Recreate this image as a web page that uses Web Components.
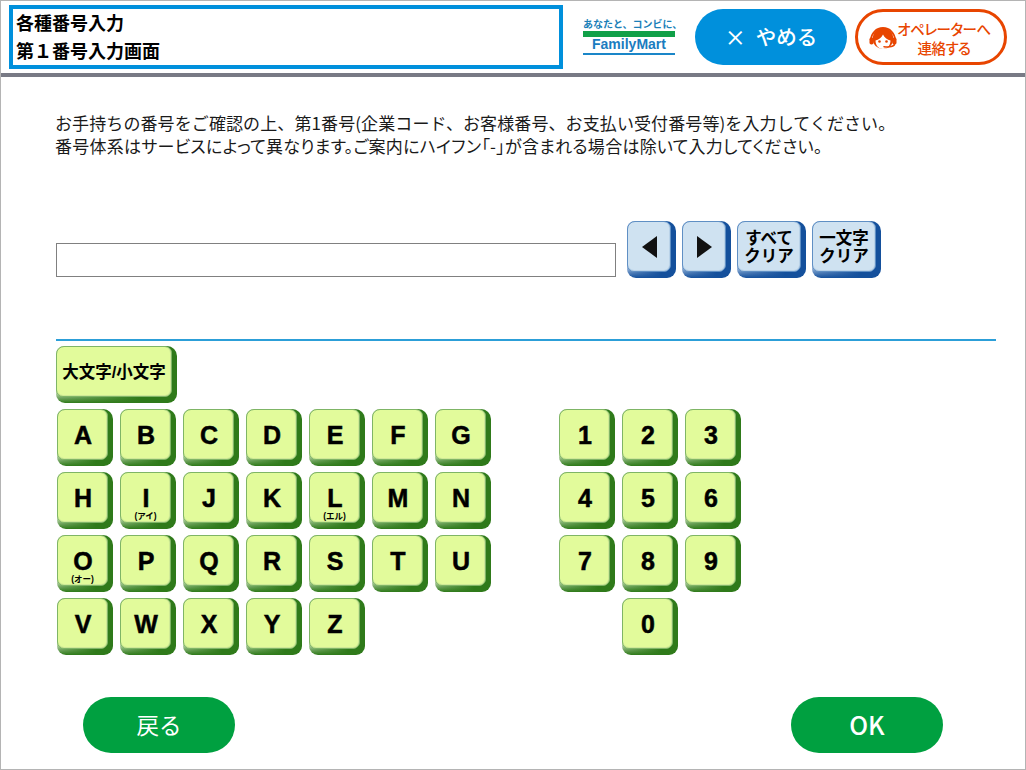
<!DOCTYPE html>
<html lang="ja">
<head>
<meta charset="utf-8">
<title>各種番号入力</title>
<style>
  html, body { margin: 0; padding: 0; background: #fff; }
  body { font-family: "Noto Sans CJK JP", "Liberation Sans", sans-serif; }
</style>
</head>
<body>
<kiosk-screen>
  <kiosk-header slot="header" line1="各種番号入力" line2="第１番号入力画面"></kiosk-header>
  <number-entry></number-entry>
  <key-pad></key-pad>
  <footer-bar></footer-bar>
</kiosk-screen>

<script>
'use strict';

const FONT = '"Noto Sans CJK JP", "Liberation Sans", sans-serif';
// latin first so that stacked lines get a compact text box
const TIGHT = '"Liberation Sans", "Noto Sans CJK JP", sans-serif';

class KioskScreen extends HTMLElement {
  constructor() {
    super();
    this.attachShadow({mode: 'open'});
    this.shadowRoot.innerHTML = `
      <style>
        :host { display: block; width: 1026px; height: 770px; box-sizing: border-box;
                border: 1px solid #b4b4b4; overflow: hidden; background: #fff; }
        .head { display: block; }
        .body { display: flex; flex-direction: column; }
      </style>
      <slot name="header" class="head"></slot>
      <div class="body"><slot></slot></div>
    `;
  }
}

class PillButton extends HTMLElement {
  constructor() {
    super();
    this.attachShadow({mode: 'open'});
    this.shadowRoot.innerHTML = `
      <style>
        :host { display: flex; align-items: center; justify-content: center; box-sizing: border-box;
                width: 152px; height: 56px; border-radius: 28px; color: #fff; padding-bottom: 2px;
                background: var(--pill-bg, #0090dc); font: 400 22.500px ${FONT}; line-height: 1; }
      </style>
      <slot></slot>
    `;
  }
}

class KioskHeader extends HTMLElement {
  constructor() {
    super();
    this.attachShadow({mode: 'open'});
    this.shadowRoot.innerHTML = `
      <style>
        :host { display: block; }
        .bar { display: flex; align-items: flex-start; height: 72px; border-bottom: 4px solid #787a85; }
        .title { box-sizing: border-box; width: 554px; height: 64px; margin: 4px 0 0 8px;
                 border: 4px solid #0090dc; padding: 0 0 3px 3px; color: #000;
                 font: 700 18px/28px ${FONT}; display: flex; flex-direction: column; justify-content: center; }
        .logo { width: 92px; margin: 14px 0 0 20px; display: flex; flex-direction: column; align-items: stretch; }
        .tag { font: 700 10px/17px ${FONT}; color: #1b7fb8; white-space: nowrap; letter-spacing: 0; height: 14px; }
        .green { height: 6px; background: #10a048; margin-top: 2px; }
        .name { font: 700 14px/15px "Liberation Sans", sans-serif; color: #1a7cc0; text-align: center; margin-top: 0; height: 16px; }
        .blue { height: 2px; background: #1a86c8; }
        .cancel { margin: 8px 0 0 20px; font-size: 20.500px; font-weight: 500; gap: 10px; }
        .x { font-size: 21px; }
        .op { margin: 8px 0 0 8px; padding-bottom: 0; --pill-bg: #fff; border: 3px solid #e84500; color: #e84500; }
        .op-in { display: flex; align-items: center; gap: 2px; margin-left: -3px; }
        .op-txt { font: 500 14.500px/19px ${TIGHT}; text-align: center; white-space: nowrap; margin-left: -3px;
                  font-feature-settings: "palt"; letter-spacing: -.5px; padding-top: 5px; }
      </style>
      <div class="bar">
        <div class="title"><div>${this.getAttribute('line1')}</div><div>${this.getAttribute('line2')}</div></div>
        <div class="logo">
          <div class="tag">あなたと、コンビに、</div>
          <div class="green"></div>
          <div class="name">FamilyMart</div>
          <div class="blue"></div>
        </div>
        <pill-button class="cancel"><span class="x">×</span><span>やめる</span></pill-button>
        <pill-button class="op">
          <div class="op-in">
            <svg width="30" height="30" viewBox="0 0 30 30">
              <path d="M3 18A12 12 0 0 1 27 18" fill="none" stroke="#e84500" stroke-width="1.800"/>
              <circle cx="15" cy="16.500" r="10.500" fill="#e84500"/>
              <path d="M7.500 18.500c3-.5 6-3 7.500-6 1.500 3 4.500 5.500 7.500 6 0 5-3.500 8.500-7.500 8.500s-7.500-3.500-7.500-8.500z" fill="#fff"/>
              <circle cx="11.500" cy="19.500" r="1.300" fill="#e84500"/>
              <circle cx="18.500" cy="19.500" r="1.300" fill="#e84500"/>
              <rect x="1.500" y="15.500" width="4" height="7" rx="1.800" fill="#e84500"/>
              <rect x="24.500" y="15.500" width="4" height="7" rx="1.800" fill="#e84500"/>
              <path d="M26.500 22c0 2.500-5 3.500-10.500 2.700" fill="none" stroke="#e84500" stroke-width="1.600" stroke-linecap="round"/>
            </svg>
            <div class="op-txt">オペレーターへ<br>連絡する</div>
          </div>
        </pill-button>
      </div>
    `;
  }
}

class KeyButton extends HTMLElement {
  constructor() {
    super();
    this.attachShadow({mode: 'open'});
    const sub = this.getAttribute('sub');
    this.shadowRoot.innerHTML = `
      <style>
        :host { display: block; position: relative; box-sizing: border-box; width: 56px; height: 57px;
                border-radius: 8px 10px 9px 9px; --cap: #e2fb9b; --rim: #7fb566; --glow: #cfe997; --side: #2f7a1a; --fade: #c6dcb8;
                background:
                  linear-gradient(to bottom, transparent 0, transparent 46px, var(--side) 57px),
                  linear-gradient(to right, var(--fade) 0, var(--side) 70%, var(--side) 100%); }
        :host([tone="blue"]) { --cap: #cfe2f1; --rim: #5f8fc4; --glow: #b9d2e8; --side: #14509c; --fade: #a9c3e2; }
        .cap { position: absolute; inset: 0 5px 6px 0; box-sizing: border-box; border: 1.500px solid var(--rim);
               border-radius: 8px 7px 7px 7px; background: var(--cap); color: #000;
               box-shadow: inset 0 -1px 0 var(--glow), inset -1px 0 0 var(--glow);
               display: flex; flex-direction: column; align-items: center; justify-content: center; padding-left: 1px; }
        :host([tone="blue"]) .cap, :host([wide]) .cap { padding-left: 0; }
        .main { font: 700 25px/18px "Liberation Sans", sans-serif; -webkit-text-stroke: .5px #000; }
        .sub { position: absolute; left: 0; right: 0; bottom: 1px; text-align: center;
               font: 700 8.500px/9px ${TIGHT}; white-space: nowrap; }
        :host([tone="blue"]) .main, :host([wide]) .main { font: 700 16.500px/18px ${TIGHT}; -webkit-text-stroke: 0; text-align: center; white-space: nowrap; }
      </style>
      <div class="cap">
        <div class="main"><slot></slot></div>
        ${sub ? `<div class="sub">${sub}</div>` : ''}
      </div>
    `;
  }
}

class NumberEntry extends HTMLElement {
  constructor() {
    super();
    this.attachShadow({mode: 'open'});
    this.shadowRoot.innerHTML = `
      <style>
        :host { display: block; padding: 34px 0 0 54px; }
        .msg { font: 400 17px/23px ${FONT}; color: #1a1a1a; white-space: nowrap; letter-spacing: .1px; }
        .second { font-feature-settings: "palt"; letter-spacing: .26px; }
        .row { display: flex; align-items: flex-end; margin-top: 64px; }
        .field { box-sizing: border-box; width: 560px; height: 34px; border: 1px solid #808080; margin-left: 1px; }
        .keys { display: flex; gap: 6px; margin: 0 0 -1px 11px; }
        .keys key-button { width: 49px; }
        .keys key-button.txt { width: 69px; }
      </style>
      <div class="msg">
        <div>お手持ちの番号をご確認の上、第1番号(企業コード、お客様番号、お支払い受付番号等)を入力してください。</div>
        <div class="second">番号体系はサービスによって異なります。ご案内にハイフン「-」が含まれる場合は除いて入力してください。</div>
      </div>
      <div class="row">
        <div class="field"></div>
        <div class="keys">
          <key-button tone="blue"><svg style="display:block" width="15" height="22" viewBox="0 0 15 22"><path d="M15 0v22L0 11z" fill="#111"/></svg></key-button>
          <key-button tone="blue"><svg style="display:block" width="15" height="22" viewBox="0 0 15 22"><path d="M0 0v22l15-11z" fill="#111"/></svg></key-button>
          <key-button tone="blue" class="txt">すべて<br>クリア</key-button>
          <key-button tone="blue" class="txt">一文字<br>クリア</key-button>
        </div>
      </div>
    `;
  }
}

class KeyPad extends HTMLElement {
  constructor() {
    super();
    this.attachShadow({mode: 'open'});
    const subs = {I: '(アイ)', L: '(エル)', O: '(オー)'};
    const letters = 'ABCDEFGHIJKLMNOPQRSTUVWXYZ'.split('').map(c =>
      `<key-button${subs[c] ? ` sub="${subs[c]}"` : ''}>${c}</key-button>`).join('');
    const digits = '123456789'.split('').map(c => `<key-button>${c}</key-button>`).join('');
    this.shadowRoot.innerHTML = `
      <style>
        :host { display: block; margin: 62px 0 0 55px; width: 940px; }
        .rule { height: 2px; background: #2c9fd8; }
        .case { width: 121px; height: 57px; margin: 5px 0 6px; }
        .pads { display: flex; gap: 68px; margin-left: 1px; }
        .grid { display: grid; grid-template-columns: repeat(7, 56px); grid-auto-rows: 57px; gap: 6px 7px; }
        .num { grid-template-columns: repeat(3, 56px); }
        .zero { grid-column: 2; }
      </style>
      <div class="rule"></div>
      <key-button wide class="case">大文字/小文字</key-button>
      <div class="pads">
        <div class="grid">${letters}</div>
        <div class="grid num">${digits}<key-button class="zero">0</key-button></div>
      </div>
    `;
  }
}

class FooterBar extends HTMLElement {
  constructor() {
    super();
    this.attachShadow({mode: 'open'});
    this.shadowRoot.innerHTML = `
      <style>
        :host { display: flex; justify-content: space-between; padding: 42px 0 0 82px; width: 860px; --pill-bg: #00a040; }
        .ok { font-size: 25px; font-weight: 500; }
      </style>
      <pill-button>戻る</pill-button>
      <pill-button class="ok">OK</pill-button>
    `;
  }
}

customElements.define('kiosk-screen', KioskScreen);
customElements.define('pill-button', PillButton);
customElements.define('kiosk-header', KioskHeader);
customElements.define('key-button', KeyButton);
customElements.define('number-entry', NumberEntry);
customElements.define('key-pad', KeyPad);
customElements.define('footer-bar', FooterBar);
</script>
</body>
</html>
